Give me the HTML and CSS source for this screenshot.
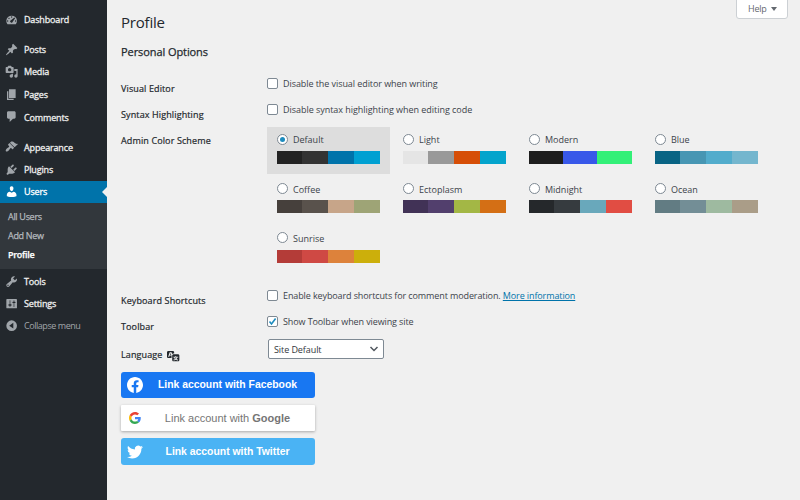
FILE: index.html
```html
<!DOCTYPE html>
<html lang="en">
<head>
<meta charset="utf-8">
<title>Profile</title>
<link rel="stylesheet" href="styles.css">
</head>
<body>
<div class="admin">
  <nav class="sidebar">
    <ul class="menu">
      <li class="item"><svg class="icon" viewBox="0 0 20 20"><path fill-rule="evenodd" d="M3.76 17h12.48A8 8 0 1 0 3.76 17zM9 6a1 1 0 1 1 2 0 1 1 0 0 1-2 0zM5 8a1 1 0 1 1 2 0 1 1 0 0 1-2 0zM14.2 6.8l1 1-3.6 5.4a1.9 1.9 0 1 1-2.6-2.4zM3 12a1 1 0 1 1 2 0 1 1 0 0 1-2 0zM15 12a1 1 0 1 1 2 0 1 1 0 0 1-2 0z"/></svg><span>Dashboard</span></li>
      <li class="item gap"><svg class="icon" viewBox="0 0 20 20"><path d="M10.44 3.02l1.82-1.82 6.36 6.35-1.83 1.82c-1.05-.68-2.48-.57-3.41.36l-.75.75c-.92.93-1.04 2.35-.35 3.41l-1.83 1.82-2.41-2.41-2.8 2.79c-.42.42-3.38 2.71-3.8 2.29s1.86-3.39 2.28-3.81l2.79-2.79L4.1 9.36l1.83-1.82c1.05.69 2.48.57 3.4-.36l.75-.75c.93-.92 1.05-2.35.36-3.41z"/></svg><span>Posts</span></li>
      <li class="item"><svg class="icon" viewBox="0 0 20 20"><path d="M13 11V4c0-.55-.45-1-1-1h-1.67L9 1H5L3.67 3H2c-.55 0-1 .45-1 1v7c0 .55.45 1 1 1h10c.55 0 1-.45 1-1zM7 4.5c1.38 0 2.5 1.12 2.5 2.5S8.380 9.500 7 9.500 4.500 8.380 4.500 7 5.620 4.500 7 4.500zM14 6h5v10.500c0 1.380-1.120 2.500-2.500 2.500S14 17.880 14 16.500s1.120-2.500 2.500-2.500c.17 0 .34.02.5.05V9h-3V6zm-4 8.050V13h2v3.500c0 1.380-1.120 2.500-2.500 2.500S7 17.880 7 16.500 8.120 14 9.500 14c.17 0 .34.02.5.05z" fill-rule="evenodd"/></svg><span>Media</span></li>
      <li class="item"><svg class="icon" viewBox="0 0 20 20"><path d="M6 15V2h10v13H6zm-1 1h8v2H3V5h2v11z"/></svg><span>Pages</span></li>
      <li class="item"><svg class="icon" viewBox="0 0 20 20"><path d="M5 2h9c1.100 0 2 .9 2 2v7c0 1.100-.9 2-2 2h-2l-5 5v-5H5c-1.100 0-2-.9-2-2V4c0-1.100.9-2 2-2z"/></svg><span>Comments</span></li>
      <li class="item gap"><svg class="icon" viewBox="0 0 20 20"><path d="M14.48 11.06L7.41 3.99l1.5-1.5c.5-.56 2.3-.47 3.51.32 1.21.8 1.43 1.28 2.91 2.1 1.18.64 2.45 1.26 4.45.85zm-.71.71L6.7 4.7 4.93 6.47c-.39.39-.39 1.02 0 1.41l1.06 1.06c.39.39.39 1.03 0 1.42-.6.6-1.43 1.11-2.21 1.69-.35.26-.7.53-1.01.84C1.43 14.23.4 16.08 1.4 17.07c.99 1 2.84-.03 4.18-1.36.31-.31.58-.66.85-1.02.57-.78 1.08-1.61 1.69-2.21.39-.39 1.02-.39 1.41 0l1.06 1.06c.39.39 1.02.39 1.41 0z"/></svg><span>Appearance</span></li>
      <li class="item"><svg class="icon" viewBox="0 0 20 20"><path d="M13.11 4.36L9.87 7.6 8 5.73l3.24-3.24c.35-.34 1.05-.2 1.56.32.52.51.66 1.21.31 1.55zm-8 1.77l.91-1.12 9.01 9.01-1.19.84c-.71.71-2.63 1.16-3.82 1.16H6.14L4.9 17.26c-.59.59-1.54.59-2.12 0-.59-.58-.59-1.53 0-2.12l1.24-1.24v-3.88c0-1.13.4-3.19 1.09-3.89zm7.26 3.97l3.24-3.24c.34-.35 1.04-.21 1.55.31.52.51.66 1.21.31 1.55l-3.24 3.25z"/></svg><span>Plugins</span></li>
      <li class="item current"><svg class="icon" viewBox="0 0 20 20"><path d="M10 9.25c-2.27 0-2.73-3.44-2.73-3.44C7 4.02 7.82 2 9.97 2c2.16 0 2.98 2.02 2.71 3.81 0 0-.41 3.44-2.68 3.44zm0 2.57L12.72 10c2.39 0 4.52 2.33 4.52 4.53v2.49s-3.65 1.13-7.24 1.13c-3.65 0-7.24-1.13-7.24-1.13v-2.49c0-2.25 1.94-4.48 4.47-4.48z"/></svg><span>Users</span></li>
    </ul>
    <ul class="submenu">
      <li>All Users</li>
      <li>Add New</li>
      <li class="active">Profile</li>
    </ul>
    <ul class="menu tail">
      <li class="item"><svg class="icon" viewBox="0 0 20 20"><path fill-rule="evenodd" d="M16.68 9.77c-1.34 1.34-3.3 1.67-4.95.99l-5.41 6.52c-.99.99-2.59.99-3.58 0s-.99-2.59 0-3.57l6.52-5.42c-.68-1.65-.35-3.61.99-4.95 1.28-1.28 3.12-1.62 4.72-1.06l-2.89 2.89 2.82 2.82 2.86-2.87c.53 1.58.18 3.39-1.08 4.65zM3.81 16.21c.4.39 1.04.39 1.43 0 .4-.4.4-1.04 0-1.43-.39-.4-1.03-.4-1.43 0-.39.39-.39 1.03 0 1.43z"/></svg><span>Tools</span></li>
      <li class="item"><svg class="icon" viewBox="0 0 20 20"><path fill-rule="evenodd" d="M18 16V4c0-.55-.45-1-1-1H3c-.55 0-1 .45-1 1v12c0 .55.45 1 1 1h14c.55 0 1-.45 1-1zM8 11h1c.55 0 1 .45 1 1s-.45 1-1 1H8v1.5c0 .28-.22.5-.5.5s-.5-.22-.5-.5V13H6c-.55 0-1-.45-1-1s.45-1 1-1h1V5.500c0-.28.22-.5.5-.5s.5.22.5.5V11zm5-2h-1c-.55 0-1-.45-1-1s.45-1 1-1h1V5.500c0-.28.22-.5.5-.5s.5.22.5.5V7h1c.55 0 1 .45 1 1s-.45 1-1 1h-1v5.500c0 .28-.22.5-.5.5s-.5-.22-.5-.5V9z"/></svg><span>Settings</span></li>
      <li class="item collapse"><svg class="icon" viewBox="0 0 20 20"><path fill-rule="evenodd" d="M10 2a8 8 0 1 1 0 16 8 8 0 0 1 0-16zM12.500 5.800L6.300 10l6.200 4.200z"/></svg><span>Collapse menu</span></li>
    </ul>
  </nav>

  <main class="content">
    <div class="help">Help <i></i></div>
    <h1>Profile</h1>
    <h2>Personal Options</h2>

    <div class="row check-row"><div class="label">Visual Editor</div><div class="field"><span class="box"></span><span class="t1">Disable the visual editor when writing</span></div></div>
    <div class="row check-row"><div class="label">Syntax Highlighting</div><div class="field"><span class="box"></span><span class="t2">Disable syntax highlighting when editing code</span></div></div>
    <div class="row scheme-row"><div class="label">Admin Color Scheme</div>
      <div class="schemes">
        <div class="scheme selected"><div class="name"><span class="radio on"></span>Default</div><div class="bar"><i class="c222"></i><i class="c333"></i><i class="c0073aa"></i><i class="c00a0d2"></i></div></div>
        <div class="scheme"><div class="name"><span class="radio"></span>Light</div><div class="bar"><i class="light1"></i><i class="light2"></i><i class="light3"></i><i class="light4"></i></div></div>
        <div class="scheme"><div class="name"><span class="radio"></span>Modern</div><div class="bar three"><i class="mod1"></i><i class="mod2"></i><i class="mod3"></i></div></div>
        <div class="scheme"><div class="name"><span class="radio"></span>Blue</div><div class="bar"><i class="blue1"></i><i class="blue2"></i><i class="blue3"></i><i class="blue4"></i></div></div>
        <div class="scheme low"><div class="name"><span class="radio"></span>Coffee</div><div class="bar"><i class="cof1"></i><i class="cof2"></i><i class="cof3"></i><i class="cof4"></i></div></div>
        <div class="scheme low"><div class="name"><span class="radio"></span>Ectoplasm</div><div class="bar"><i class="ect1"></i><i class="ect2"></i><i class="ect3"></i><i class="ect4"></i></div></div>
        <div class="scheme low"><div class="name"><span class="radio"></span>Midnight</div><div class="bar"><i class="mid1"></i><i class="mid2"></i><i class="mid3"></i><i class="mid4"></i></div></div>
        <div class="scheme low"><div class="name"><span class="radio"></span>Ocean</div><div class="bar"><i class="oce1"></i><i class="oce2"></i><i class="oce3"></i><i class="oce4"></i></div></div>
        <div class="scheme low last"><div class="name"><span class="radio"></span>Sunrise</div><div class="bar"><i class="sun1"></i><i class="sun2"></i><i class="sun3"></i><i class="sun4"></i></div></div>
      </div>
    </div>
    <div class="row check-row"><div class="label">Keyboard Shortcuts</div><div class="field"><span class="box"></span><span class="t3">Enable keyboard shortcuts for comment moderation. <a>More information</a></span></div></div>
    <div class="row check-row"><div class="label">Toolbar</div><div class="field"><span class="box"><svg viewBox="0 0 11 11"><path d="M2.500 5.600L4.500 8 8.600 2.500" fill="none" stroke="#1e8cbe" stroke-width="1.600"/></svg></span><span class="t3">Show Toolbar when viewing site</span></div></div>
    <div class="row lang-row"><div class="label">Language <svg class="translate" viewBox="0 0 20 20"><path fill-rule="evenodd" d="M11 7H9.490c-.63 0-1.250.3-1.590.7L7 5H4.130l-2.390 7h1.690l.74-2H7v4H2c-1.100 0-2-.9-2-2V5c0-1.100.9-2 2-2h7c1.100 0 2 .9 2 2v2zM6.510 9H4.490l1-2.930zM10 8h7c1.100 0 2 .9 2 2v7c0 1.100-.9 2-2 2h-7c-1.100 0-2-.9-2-2v-7c0-1.100.9-2 2-2zm7.250 5v-1.080h-3.170V10.750h-1.160v1.170H9.750V13h1.280c.11.85.56 1.850 1.280 2.620-.87.36-1.890.62-2.310.62-.01.02.22.970.2 1.460.84 0 2.210-.5 3.280-1.150 1.090.65 2.480 1.150 3.340 1.150-.02-.49.200-1.440.2-1.460-.43 0-1.490-.27-2.380-.63.7-.77 1.140-1.770 1.250-2.610h1.360zm-3.810 1.930c-.5-.46-.85-1.130-1.010-1.930h2.090c-.17.8-.51 1.470-1 1.930z"/></svg></div>
      <div class="select"><span>Site Default</span><svg viewBox="0 0 10 8"><path d="M1.500 2L5 5.500 8.500 2" fill="none" stroke="#50575e" stroke-width="1.500"/></svg></div>
    </div>

    <div class="social">
      <div class="btn facebook"><svg viewBox="0 0 24 24"><path fill="#fff" d="M24 12.070C24 5.410 18.630 0 12 0S0 5.410 0 12.070C0 18.100 4.390 23.090 10.130 24v-8.440H7.080v-3.490h3.050V9.410c0-3.020 1.790-4.690 4.530-4.690 1.310 0 2.680.24 2.680.24v2.970h-1.510c-1.490 0-1.950.93-1.950 1.890v2.250h3.320l-.53 3.490h-2.790V24C19.610 23.090 24 18.100 24 12.070z"/></svg><span>Link account with <b>Facebook</b></span></div>
      <div class="btn google"><svg viewBox="0 0 48 48"><path fill="#ea4335" d="M24 9.500c3.540 0 6.710 1.220 9.210 3.600l6.850-6.850C35.900 2.380 30.470 0 24 0 14.620 0 6.510 5.380 2.560 13.220l7.980 6.190C12.430 13.720 17.740 9.500 24 9.500z"/><path fill="#4285f4" d="M46.980 24.550c0-1.570-.15-3.090-.38-4.550H24v9.020h12.940c-.58 2.960-2.260 5.480-4.780 7.180l7.730 6c4.510-4.180 7.090-10.360 7.090-17.650z"/><path fill="#fbbc05" d="M10.530 28.590A14.500 14.500 0 0 1 9.770 24c0-1.600.27-3.140.76-4.590l-7.980-6.190A24 24 0 0 0 0 24c0 3.880.92 7.540 2.560 10.780z"/><path fill="#34a853" d="M24 48c6.480 0 11.930-2.130 15.890-5.810l-7.730-6c-2.150 1.450-4.920 2.300-8.160 2.300-6.260 0-11.570-4.220-13.470-9.910l-7.980 6.190C6.510 42.620 14.620 48 24 48z"/></svg><span>Link account with <b>Google</b></span></div>
      <div class="btn twitter"><svg viewBox="0 0 24 24"><path fill="#fff" d="M23.950 4.570a10 10 0 0 1-2.820.77 4.960 4.960 0 0 0 2.160-2.720c-.95.55-2 .95-3.130 1.180a4.920 4.920 0 0 0-8.380 4.480C7.690 8.090 4.070 6.130 1.640 3.160a4.820 4.820 0 0 0-.66 2.470c0 1.710.87 3.210 2.190 4.100a4.900 4.900 0 0 1-2.230-.62v.06a4.920 4.920 0 0 0 3.950 4.830 5 5 0 0 1-2.210.08 4.940 4.940 0 0 0 4.600 3.420A9.870 9.870 0 0 1 0 19.540a13.990 13.990 0 0 0 7.560 2.210c9.050 0 13.990-7.500 13.990-13.980 0-.21 0-.42-.02-.63a9.940 9.940 0 0 0 2.420-2.570z"/></svg><span>Link account with <b>Twitter</b></span></div>
    </div>
  </main>
</div>
</body>
</html>
```
FILE: styles.css
```css
* { box-sizing: border-box; }
body { margin: 0; background: #f0f0f0; font-family: "Open Sans", sans-serif; font-size: 9px; color: #3c434a; overflow: hidden; }
ul { list-style: none; margin: 0; padding: 0; }
.admin { display: flex; width: 800px; height: 500px; }

.sidebar { width: 107px; flex: none; background: #23282d; padding-top: 8px; }
.item { display: flex; align-items: center; height: 22.6px; padding-left: 5px; color: #eee; white-space: nowrap; position: relative; letter-spacing: -0.15px; }
.item span { -webkit-text-stroke: 0.3px currentColor; }
.item.gap { margin-top: 7.4px; }
.icon { width: 13.3px; height: 13.3px; fill: #a0a5aa; margin-right: 5.7px; flex: none; }
.current { background: #0073aa; color: #fff; height: 22px; }
.current .icon { fill: #fff; }
.current::after { content: ""; position: absolute; right: 0; top: 6px; border: 5px solid transparent; border-right-color: #f0f0f0; border-left: 0; }
.submenu { background: #32373c; height: 66px; padding: 4px 0 0 8px; color: #b4b9be; letter-spacing: -0.3px; -webkit-text-stroke: 0.25px currentColor; }
.submenu li { height: 19px; line-height: 19px; }
.submenu .active { color: #fff; font-weight: 600; }
.tail { padding-top: 1px; }
.item.collapse { color: #a0a5aa; letter-spacing: -0.45px; height: 21.600px; }
.collapse span { -webkit-text-stroke: 0; }

.content { flex: 1; padding-left: 14px; position: relative; }
.help { position: absolute; right: 12px; top: -1px; width: 52px; height: 20px; border: 1px solid #ccd0d4; border-radius: 0 0 3px 3px; background: #fff; color: #646970; line-height: 18px; padding-left: 11px; display: flex; align-items: center; gap: 4px; letter-spacing: -0.2px; }
.help i { border: 3px solid transparent; border-top: 4px solid #646970; border-bottom: 0; }
h1 { margin: 0; padding-top: 11px; height: 42px; line-height: 22px; font-size: 15px; letter-spacing: -0.2px; font-weight: 400; color: #23282d; }
h2 { margin: 0; height: 34px; line-height: 20px; font-size: 11px; font-weight: 400; letter-spacing: -0.08px; color: #23282d; -webkit-text-stroke: 0.25px currentColor; }
.row { display: flex; white-space: nowrap; }
.label { width: 146px; flex: none; color: #23282d; line-height: 14px; letter-spacing: 0.12px; -webkit-text-stroke: 0.2px currentColor; }
.check-row { height: 26px; }
.check-row .label { padding-top: 6px; }
.field { display: flex; height: 15px; align-items: center; }
.t1 { letter-spacing: -0.07px; }
.t2 { letter-spacing: -0.04px; }
.t3 { letter-spacing: -0.11px; }
.box { width: 11px; height: 11px; border: 1px solid #7e8993; border-radius: 2px; background: #fff; margin-right: 5px; flex: none; display: flex; }
.box svg { width: 11px; height: 11px; margin: -1px; }
a { color: #0073aa; text-decoration: underline; }

.scheme-row { height: 160px; }
.scheme-row .label { padding-top: 6px; }
.schemes { display: grid; grid-template-columns: repeat(4, 126px); grid-template-rows: 49px 49px 49px; margin-top: -1px; }
.scheme { padding: 5px 10px 0; width: 123px; height: 47px; }
.selected { background: #ddd; }
.name { display: flex; align-items: center; height: 15px; }
.radio { width: 11px; height: 11px; border: 1px solid #7e8993; border-radius: 50%; background: #fff; margin-right: 5px; display: grid; place-items: center; }
.on::after { content: ""; width: 5px; height: 5px; border-radius: 50%; background: #1e8cbe; }
.bar { display: grid; grid-template-columns: 25px 26px 26px 26px; height: 13px; margin-top: 4px; }
.three { grid-template-columns: 34px 34px 35px; }
.low .name { height: 17px; }
.low .radio { margin-bottom: 2px; }
.low .bar { margin-top: 2px; }
.last .bar { margin-top: 3px; }
.c222 { background: #222; } .c333 { background: #333; } .c0073aa { background: #0073aa; } .c00a0d2 { background: #00a0d2; }
.light1 { background: #e5e5e5; } .light2 { background: #999; } .light3 { background: #d64e07; } .light4 { background: #04a4cc; }
.mod1 { background: #1e1e1e; } .mod2 { background: #3858e9; } .mod3 { background: #33f078; }
.blue1 { background: #096484; } .blue2 { background: #4796b3; } .blue3 { background: #52accc; } .blue4 { background: #74b6ce; }
.cof1 { background: #46403c; } .cof2 { background: #59524c; } .cof3 { background: #c7a589; } .cof4 { background: #9ea476; }
.ect1 { background: #413256; } .ect2 { background: #523f6d; } .ect3 { background: #a3b745; } .ect4 { background: #d46f15; }
.mid1 { background: #25282b; } .mid2 { background: #363b3f; } .mid3 { background: #69a8bb; } .mid4 { background: #e14d43; }
.oce1 { background: #627c83; } .oce2 { background: #738e96; } .oce3 { background: #9ebaa0; } .oce4 { background: #aa9d88; }
.sun1 { background: #b43c38; } .sun2 { background: #cf4944; } .sun3 { background: #dd823b; } .sun4 { background: #ccaf0b; }

.lang-row { height: 32px; }
.lang-row .label { padding-top: 6px; display: flex; align-items: center; gap: 4px; height: 24px; }
.translate { width: 13px; height: 13px; fill: #23282d; }
.select { width: 116px; height: 20px; margin: -1px 0 0 1px; border: 1px solid #7e8993; border-radius: 2px; background: #fff; color: #32373c; display: flex; align-items: center; justify-content: space-between; padding: 0 4px 0 5px; letter-spacing: -0.08px; }
.select svg { width: 10px; height: 8px; }

.social { width: 194px; font-family: "Liberation Sans", sans-serif; font-size: 10.4px; }
.btn { height: 26px; margin-bottom: 7px; border-radius: 3px; color: #fff; font-weight: 700; display: flex; align-items: center; }
.btn svg { width: 16px; height: 16px; margin-left: 6px; flex: none; }
.btn span { flex: 1; text-align: center; padding: 0 3px 1px 0; white-space: nowrap; }
.facebook { background: #1877f2; }
.google { background: #fff; color: #757575; font-size: 11px; font-weight: 400; border-radius: 1px; box-shadow: 0 1px 3px rgba(0, 0, 0, .3); }
.google svg { width: 12px; height: 12px; margin: 0 2px 0 8px; }
.twitter { background: #4ab3f4; height: 27px; }
```
